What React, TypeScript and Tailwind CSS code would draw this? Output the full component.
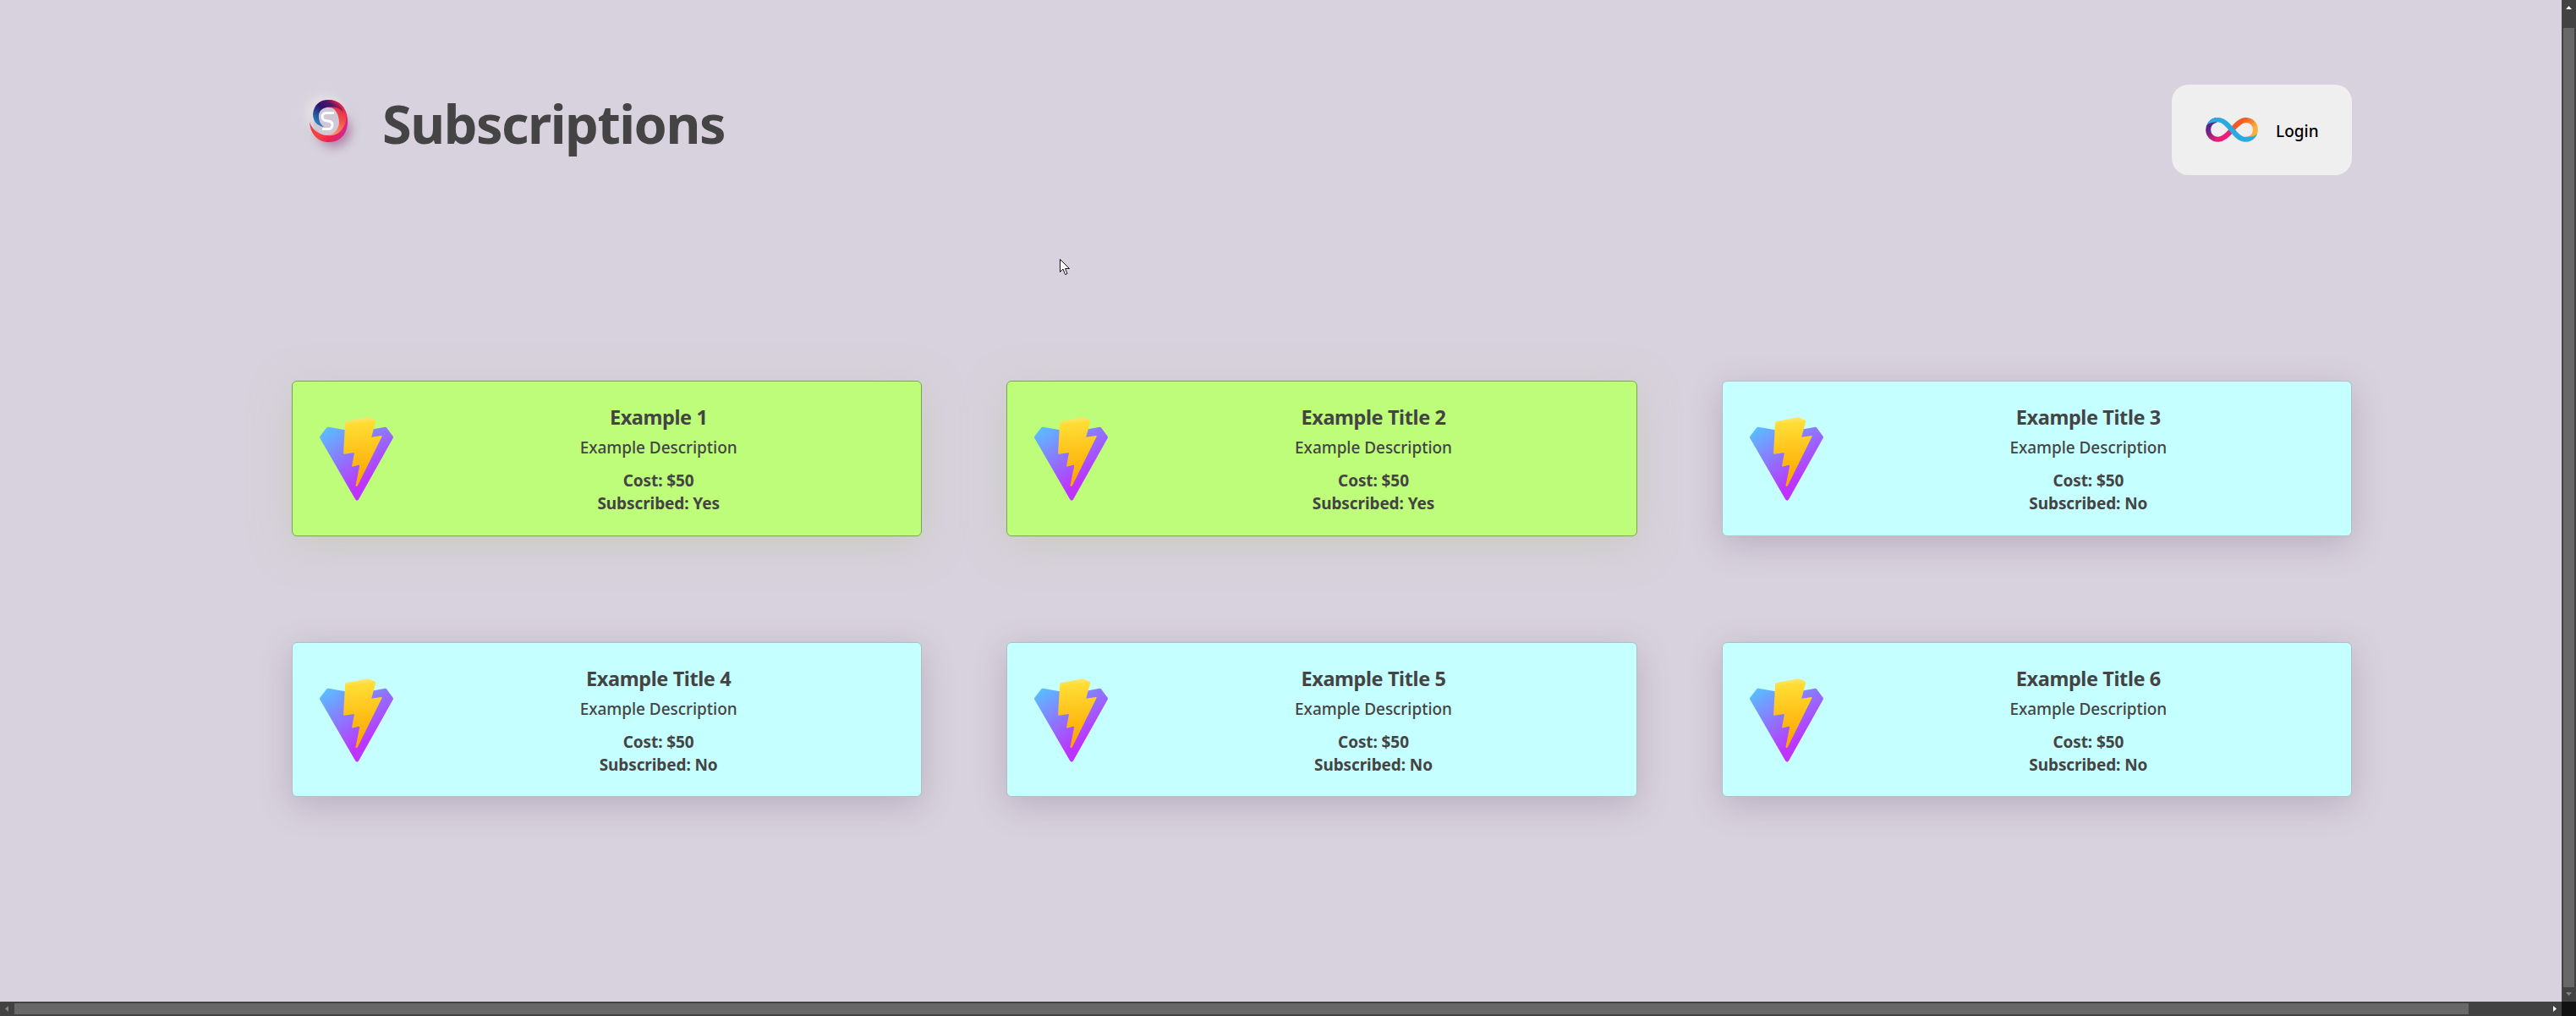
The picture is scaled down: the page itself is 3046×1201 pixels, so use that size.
function Plan({ title, on }: { title: string; on: boolean }) {
  return (
    <article
      className={
        "flex items-start rounded-md border font-['Noto_Sans',sans-serif] text-[#444] " +
        (on
          ? "border-[#7ba650] bg-[#befd7a] shadow-[0_10px_50px_rgba(196,200,182,0.8)]"
          : "border-[#b5bcc2] bg-[#c5ffff] shadow-[0_10px_40px_rgba(80,60,90,0.23)]")
      }
    >
      <div className="mt-[42px] ml-[32px] w-[88px] shrink-0">
        <svg viewBox="143 191 260 296" className="block h-[99px] w-[87px]">
          <defs>
            <linearGradient id="gem" gradientUnits="userSpaceOnUse" x1="155" y1="225" x2="290" y2="430">
              <stop stopColor="#54c4ff" />
              <stop offset="1" stopColor="#bd34fe" />
            </linearGradient>
            <linearGradient id="bolt" gradientUnits="userSpaceOnUse" x1="268" y1="198" x2="284" y2="410">
              <stop stopColor="#ffe46a" />
              <stop offset="0.08" stopColor="#ffdd35" />
              <stop offset="1" stopColor="#ffa800" />
            </linearGradient>
          </defs>
          <path d="M144 259Q142 262 144 266L269 482Q275 490 281 482L402 266Q404 262 402 259L380 229Q377 225 371 227L275 244L174 226Q170 225 167 229Z" fill="url(#gem)" />
          <path d="M236 207L311 192Q316 191 320 193L339 202Q342 204 341 207L326 262L361 257Q365 257 362 262L277 434Q272 439 270 433L284 364Q284 360 280 361L260 366Q256 366 257 362L265 320Q265 316 261 317L230 322Q227 322 227 318L233 211Q233 208 236 207Z" fill="url(#bolt)" />
        </svg>
      </div>
      <div className="ml-[2px] w-[630px] pt-[25px] text-center">
        <h2 className="text-[23.5px] leading-[34px] font-bold tracking-[-0.4px]">{title}</h2>
        <p className="mt-[3px] text-[19px] leading-8 font-medium tracking-[-0.05px]">Example Description</p>
        <p className="mt-[10px] text-[19px] leading-[27px] font-bold tracking-[-0.1px]">Cost: $50</p>
        <p className="text-[19px] leading-[27px] font-bold tracking-[-0.1px]">Subscribed: {on ? "Yes" : "No"}</p>
      </div>
    </article>
  );
}

function Brand() {
  return (
    <svg viewBox="0 0 90 90" className="ml-[5px] h-[90px] w-[90px]">
      <defs>
        <linearGradient id="ringTop" x1="0" y1="1" x2="1" y2="0">
          <stop stopColor="#31a5cf" />
          <stop offset="0.3" stopColor="#24509a" />
          <stop offset="0.5" stopColor="#2b146b" />
          <stop offset="0.7" stopColor="#4a1668" />
          <stop offset="0.85" stopColor="#c81c55" />
          <stop offset="1" stopColor="#f13045" />
        </linearGradient>
        <linearGradient id="ringBottom" x1="0" y1="0.2" x2="1" y2="0.8">
          <stop stopColor="#f0304a" />
          <stop offset="0.45" stopColor="#f4433f" />
          <stop offset="0.7" stopColor="#ed2450" />
          <stop offset="1" stopColor="#cc269f" />
        </linearGradient>
        <linearGradient id="ringRight" x1="0.5" y1="0" x2="0.3" y2="1">
          <stop stopColor="#d7204c" />
          <stop offset="0.5" stopColor="#f54b48" />
          <stop offset="1" stopColor="#ff9d63" />
        </linearGradient>
        <radialGradient id="tile">
          <stop stopColor="#d2cfdb" />
          <stop offset="0.8" stopColor="#d5d2dd" />
          <stop offset="1" stopColor="#d8d2de" />
        </radialGradient>
        <filter id="soft" x="-50%" y="-50%" width="200%" height="200%">
          <feGaussianBlur stdDeviation="6" />
        </filter>
      </defs>
      <rect width="82" height="88" fill="url(#tile)" />
      <circle cx="34" cy="35" r="23" fill="#eee6e7" opacity="0.7" filter="url(#soft)" />
      <circle cx="45" cy="54" r="20" fill="#a0568c" opacity="0.6" filter="url(#soft)" />
      <circle cx="39" cy="43" r="18" fill="#cfc9d7" />
      <path d="M16 44C17 58 25 68 39 68C54 68 62 56 61 41C60 27 51 18 38 18C51 21 57 31 56 43C54 56 45 60 36 60C26 59 19 53 16 44Z" fill="url(#ringBottom)" />
      <path d="M38 18C53 18 61 29 59 43C56 55 47 62 37 60C49 58 53 48 50 38C48 30 44 27 38 27Z" fill="url(#ringRight)" />
      <path d="M33 50C25 49 20 43 20 35C21 24 28 18 38 18C47 18 54 24 56 33C52 27 46 26 39 26.500C31 27 26 32 27 39C27.500 44 29 47 33 50Z" fill="url(#ringTop)" />
      <path d="M45 33.500H35.500C29.500 34 29.500 42 36 42.800L39 43.200C45 44.500 44 52.500 38 52.500H31" fill="none" stroke="#fff" strokeWidth="3" />
    </svg>
  );
}

function Infinity() {
  return (
    <svg viewBox="174 147 187 88" className="h-[29px] w-[62px]">
      <defs>
        <linearGradient id="loopRight" x1="0.1" y1="0" x2="1" y2="0.8">
          <stop offset="0.25" stopColor="#f15a24" />
          <stop offset="0.75" stopColor="#fbb03b" />
        </linearGradient>
        <linearGradient id="loopLeft" x1="0.9" y1="1" x2="0" y2="0.2">
          <stop offset="0.3" stopColor="#ed1e79" />
          <stop offset="0.9" stopColor="#522785" />
        </linearGradient>
      </defs>
      <path d="M268 191C286 170 300 156 317 156C338 156 352 171 352 190C352 207 341 222 320 225" fill="none" stroke="url(#loopRight)" strokeWidth="18" />
      <path d="M268 191C250 212 236 225 219 225C197 225 183 209 183 191C183 176 192 161 212 156" fill="none" stroke="url(#loopLeft)" strokeWidth="18" />
      <path d="M178 173C185 157 199 147 218 147C240 147 256 163 274 184C293 206 303 216 317 216C337 217 350 215 359 205C351 224 337 234 317 234C294 234 279 218 260 196C241 174 231 163 215 163C200 163 189 165 178 173Z" fill="#29abe2" />
    </svg>
  );
}

const plans = [
  { title: "Example 1", on: true },
  { title: "Example Title 2", on: true },
  { title: "Example Title 3", on: false },
  { title: "Example Title 4", on: false },
  { title: "Example Title 5", on: false },
  { title: "Example Title 6", on: false },
];

export default function App() {
  return (
    <div className="relative grid h-[1201px] w-[3046px] grid-cols-[3029px_17px] grid-rows-[1184px_17px] overflow-hidden bg-[#d8d2de] font-['Noto_Sans',sans-serif]">
      <main className="pt-[100px] pr-[248px] pl-[345px]">
        <header className="flex h-[107px] justify-between">
          <div className="flex">
            <Brand />
            <h1 className="ml-[12px] text-[63px] leading-[92px] font-bold tracking-[-1.5px] text-[#444]">Subscriptions</h1>
          </div>
          <button className="flex h-[107px] w-[213px] items-center rounded-[20px] bg-[#efefef] pl-10 text-[19px] font-medium text-black">
            <Infinity />
            <span className="mt-[3px] ml-[21px]">Login</span>
          </button>
        </header>
        <section className="mt-[243px] grid grid-cols-3 grid-rows-[184px_183px] gap-x-[100px] gap-y-[125px]">
          {plans.map((p) => (
            <Plan key={p.title} {...p} />
          ))}
        </section>
      </main>
      <div className="flex flex-col items-center bg-[#424242]">
        <div className="flex h-[33px] items-start pt-[7px]">
          <svg viewBox="0 0 7 4" className="h-1 w-[7px]"><path d="M0 4L3.500 0L7 4Z" fill="#fff" /></svg>
        </div>
        <div className="h-[1134px] w-[13px] bg-[#686868]" />
        <svg viewBox="0 0 7 4" className="mt-[6px] h-1 w-[7px]"><path d="M0 0H7L3.500 4Z" fill="#868686" /></svg>
      </div>
      <div className="flex items-center bg-[#424242]">
        <svg viewBox="0 0 4 7" className="ml-[6px] h-[7px] w-1"><path d="M4 0V7L0 3.500Z" fill="#868686" /></svg>
        <div className="ml-[7px] h-[13px] w-[2902px] bg-[#686868]" />
        <svg viewBox="0 0 4 7" className="ml-[100px] h-[7px] w-1"><path d="M0 0V7L4 3.500Z" fill="#fff" /></svg>
      </div>
      <div className="bg-[#111]" />
      <svg viewBox="0 0 12 20" className="absolute top-[306px] left-[1253px] h-[20px] w-[12px]">
        <path d="M0.500 0.500V15.500L4 12L6.500 18.500L9 17.500L6.500 11.500H11.500Z" fill="#fff" stroke="#111322" />
      </svg>
    </div>
  );
}
